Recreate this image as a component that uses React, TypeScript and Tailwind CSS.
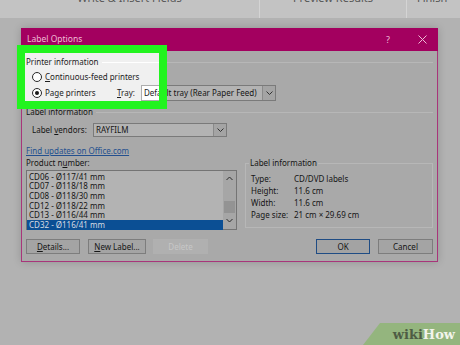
import React from 'react';

const products = [
  'CD06 - Ø117/41 mm',
  'CD07 - Ø118/18 mm',
  'CD08 - Ø118/30 mm',
  'CD12 - Ø118/22 mm',
  'CD13 - Ø116/44 mm',
  'CD32 - Ø116/41 mm',
];

const labelInfo: [string, string][] = [
  ['Type:', 'CD/DVD labels'],
  ['Height:', '11.6 cm'],
  ['Width:', '11.6 cm'],
  ['Page size:', '21 cm × 29.69 cm'],
];

export default function App() {
  return (
    <div className="relative w-[460px] h-[345px] overflow-hidden bg-[#b2b2b2] font-['Noto_Sans','Liberation_Sans',sans-serif] text-[8px] text-[#151515]">
      {/* Ribbon strip, cut off at the top */}
      <div className="flex h-[18px] bg-[#c3c3c3] text-[11px] leading-[11px] text-[#555]">
        <div className="flex w-[260px] justify-center border-r border-[#d4d4d4]">
          <span className="-mt-[8px]">Write &amp; Insert Fields</span>
        </div>
        <div className="flex w-[147px] justify-center border-r border-[#d4d4d4]">
          <span className="-mt-[8px]">Preview Results</span>
        </div>
        <div className="flex flex-1 pl-[10px]">
          <span className="-mt-[8px]">Finish</span>
        </div>
      </div>

      {/* Dialog */}
      <div className="ml-[21px] mt-[10px] w-[417px] shadow-[0_0_8px_rgba(0,0,0,0.18)]">
        <div className="flex h-[23px] items-center bg-[#a3005f] pl-[6px] pr-[11px] text-[8.5px] text-[#efbcd6]">
          <span className="flex-1">Label Options</span>
          <span className="mr-[28px] text-[9px]">?</span>
          <svg width="9" height="9" viewBox="0 0 9 9" stroke="#efbcd6" strokeWidth="1">
            <path d="M0.5 0.5 L8.5 8.5 M8.5 0.5 L0.5 8.5" />
          </svg>
        </div>

        <div className="border-x border-b border-[#a8357a] bg-[#a9a9a9] px-[4px] pt-[6px] pb-[7px]">
          {/* Printer information */}
          <SectionHeader title="Printer information" />
          <div className="mt-[5px] flex h-[10px] items-center pl-[6px]">
            <Radio />
            <span className="ml-[3px]">
              <u>C</u>ontinuous-feed printers
            </span>
          </div>
          <div className="mt-[3px] flex h-[16px] items-center pl-[6px]">
            <div className="flex w-[85px] items-center">
              <Radio checked />
              <span className="ml-[3px]">
                Pa<u>g</u>e printers
              </span>
            </div>
            <span className="w-[24px]">
              <u>T</u>ray:
            </span>
            <Dropdown width="w-[135px]" height="h-[16px]" value="Default tray (Rear Paper Feed)" />
          </div>

          {/* Label information */}
          <div className="mt-[6px]">
            <SectionHeader title="Label information" />
          </div>
          <div className="mt-[6px] flex h-[14px] items-center pl-[6px]">
            <span className="w-[61px]">
              Label <u>v</u>endors:
            </span>
            <Dropdown width="w-[134px]" height="h-[14px]" value="RAYFILM" />
          </div>

          <div className="flex">
            <div className="w-[211px]">
              <div className="mt-[9px] flex h-[10px] items-center">
                <span className="text-[#24508f] underline">Find updates on Office.com</span>
              </div>
              <div className="mt-[2px] flex h-[10px] items-center">
                <span>
                  Product n<u>u</u>mber:
                </span>
              </div>
              <div className="mt-[2px] flex h-[60px] border border-[#747474] bg-[#b3b3b3]">
                <div className="flex-1 pt-[1px]">
                  {products.map((p, i) => (
                    <div
                      key={p}
                      className={
                        i === products.length - 1
                          ? 'flex h-[9.6px] items-center bg-[#0b4f94] pl-[2px] text-[#d6dbe2]'
                          : 'flex h-[9.6px] items-center pl-[2px]'
                      }
                    >
                      {p}
                    </div>
                  ))}
                </div>
                <div className="flex w-[13px] flex-col items-center bg-[#a6a6a6]">
                  <svg className="mt-[5px]" width="7" height="5" viewBox="0 0 7 5" fill="none" stroke="#2a2a2a" strokeWidth="1">
                    <path d="M0.5 4 L3.5 1 L6.5 4" />
                  </svg>
                  <div className="mt-[20px] h-[12px] w-[11px] bg-[#939393]" />
                  <svg className="mt-[5px]" width="7" height="5" viewBox="0 0 7 5" fill="none" stroke="#2a2a2a" strokeWidth="1">
                    <path d="M0.5 1 L3.5 4 L6.5 1" />
                  </svg>
                </div>
              </div>
            </div>

            <div className="ml-[8px] flex-1">
              <div className="mt-[26px] h-[65px] border border-[#b7b7b7] pl-[5px]">
                <div className="-mt-[6px] -ml-[2px] w-fit bg-[#a9a9a9] px-[1px] leading-[10px]">
                  Label information
                </div>
                <div className="mt-[5px] flex flex-col">
                  {labelInfo.map(([k, v]) => (
                    <div key={k} className="flex h-[12px] items-center">
                      <span className="w-[43px]">{k}</span>
                      <span>{v}</span>
                    </div>
                  ))}
                </div>
              </div>
            </div>
          </div>

          {/* Buttons */}
          <div className="mt-[9px] flex h-[15px]">
            <Button width="w-[54px]">
              <u>D</u>etails...
            </Button>
            <div className="ml-[8px]">
              <Button width="w-[58px]">
                <u>N</u>ew Label...
              </Button>
            </div>
            <div className="ml-[7px] flex h-[15px] w-[55px] items-center justify-center bg-[#b0b0b0] text-[#c7c7c7]">
              Delete
            </div>
            <div className="flex-1" />
            <div className="flex h-[15px] w-[54px] items-center justify-center border-[1.5px] border-[#1f4c84] bg-[#a3a3a3]">
              OK
            </div>
            <div className="ml-[8px]">
              <Button width="w-[55px]">Cancel</Button>
            </div>
          </div>
        </div>
      </div>

      {/* Green highlight annotation */}
      <div className="absolute left-[17px] top-[45px] h-[64px] w-[150px] border-[8px] border-[#22f41f] backdrop-brightness-[1.42]" />

      {/* wikiHow watermark */}
      <div className="absolute bottom-0 right-0 flex h-[22px] w-[97px] items-center justify-end bg-[#94b57e] pr-[5px] [clip-path:polygon(17px_0,100%_0,100%_100%,0_100%)] font-['DejaVu_Serif',serif] text-[13px] font-bold leading-none">
        <span className="text-[#4e5c44]">wiki</span>
        <span className="text-[#f2f4ec]">How</span>
      </div>
    </div>
  );
}

function SectionHeader({ title }: { title: string }) {
  return (
    <div className="flex h-[10px] items-center">
      <span>{title}</span>
      <div className="ml-[3px] h-px flex-1 bg-[#b7b7b7]" />
    </div>
  );
}

function Radio({ checked = false }: { checked?: boolean }) {
  return (
    <div className="flex h-[10px] w-[10px] items-center justify-center rounded-full border border-[#1c1c1c] bg-[#b3b3b3]">
      {checked && <div className="h-[4px] w-[4px] rounded-full bg-[#111]" />}
    </div>
  );
}

function Dropdown({ width, height, value }: { width: string; height: string; value: string }) {
  return (
    <div className={`flex ${width} ${height} items-stretch border border-[#7a7a7a] bg-[#b3b3b3]`}>
      <div className="flex flex-1 items-center overflow-hidden whitespace-nowrap pl-[2px]">{value}</div>
      <div className="flex w-[13px] items-center justify-center border-l border-[#8a8a8a] bg-[#a4a4a4]">
        <svg width="7" height="4" viewBox="0 0 7 4" fill="none" stroke="#333" strokeWidth="1">
          <path d="M0.5 0.5 L3.5 3.5 L6.5 0.5" />
        </svg>
      </div>
    </div>
  );
}

function Button({ width, children }: { width: string; children: React.ReactNode }) {
  return (
    <div className={`flex h-[15px] ${width} items-center justify-center border border-[#7d7d7d] bg-[#a4a4a4]`}>
      {children}
    </div>
  );
}
